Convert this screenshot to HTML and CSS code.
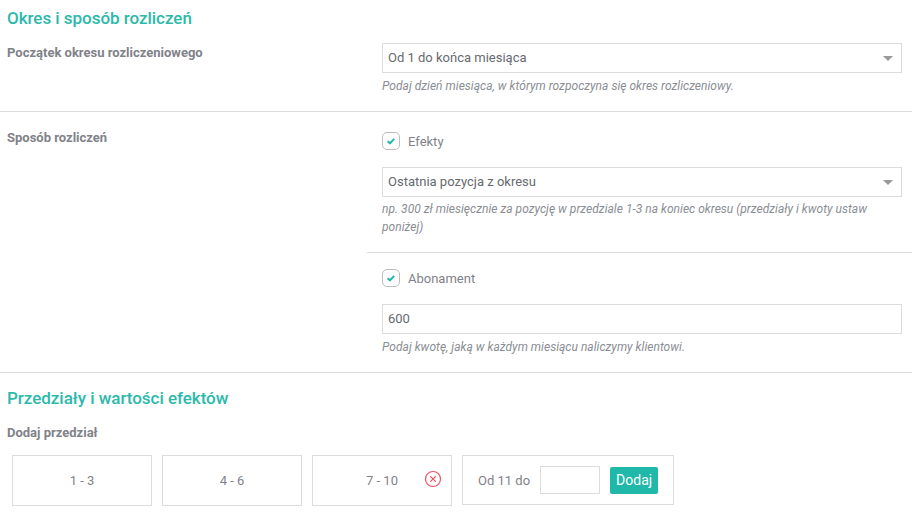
FILE: index.html
```html
<!DOCTYPE html>
<html lang="pl">
<head>
<meta charset="utf-8">
<title>Okres i sposób rozliczeń</title>
<link rel="stylesheet" href="styles.css">
</head>
<body>
<h2 class="heading first">Okres i sposób rozliczeń</h2>
<section class="row row-period">
  <div class="label">Początek okresu rozliczeniowego</div>
  <div class="field">
    <div class="select"><span>Od 1 do końca miesiąca</span><i class="caret"></i></div>
    <p class="hint">Podaj dzień miesiąca, w którym rozpoczyna się okres rozliczeniowy.</p>
  </div>
</section>
<section class="row row-method">
  <div class="label">Sposób rozliczeń</div>
  <div class="field-wide">
    <div class="sub sub-top">
      <label class="check"><span class="box"><svg viewBox="0 0 10 10" width="10" height="10"><path d="M1.6 5.2 4 7.3 8.2 2.9" fill="none" stroke="#20b8a9" stroke-width="2"/></svg></span>Efekty</label>
      <div class="select"><span>Ostatnia pozycja z okresu</span><i class="caret"></i></div>
      <p class="hint hint-tight">np. 300 zł miesięcznie za pozycję w przedziale 1-3 na koniec okresu (przedziały i kwoty ustaw poniżej)</p>
    </div>
    <div class="sub sub-bottom">
      <label class="check"><span class="box"><svg viewBox="0 0 10 10" width="10" height="10"><path d="M1.6 5.2 4 7.3 8.2 2.9" fill="none" stroke="#20b8a9" stroke-width="2"/></svg></span>Abonament</label>
      <div class="select"><span>600</span></div>
      <p class="hint">Podaj kwotę, jaką w każdym miesiącu naliczymy klientowi.</p>
    </div>
  </div>
</section>
<h2 class="heading second">Przedziały i wartości efektów</h2>
<div class="label add-label">Dodaj przedział</div>
<div class="ranges">
  <div class="range">1 - 3</div>
  <div class="range">4 - 6</div>
  <div class="range range-x">7 - 10
    <svg class="remove" viewBox="0 0 18 18" width="18" height="18"><circle cx="9" cy="9" r="7.5" fill="none" stroke="#f0505f" stroke-width="1.2"/><path d="M6.2 6.2 11.8 11.8M11.8 6.2 6.2 11.8" stroke="#f0505f" stroke-width="1.2"/></svg>
  </div>
  <div class="range-add">
    <span>Od 11 do</span>
    <span class="mini-input"></span>
    <button class="add" type="button">Dodaj</button>
  </div>
</div>
</body>
</html>
```
FILE: styles.css
```css
* { box-sizing: border-box; }
html, body { margin: 0; padding: 0; }
body {
  width: 912px;
  height: 519px;
  overflow: hidden;
  background: #fff;
  font-family: Roboto, "Liberation Sans", sans-serif;
  font-size: 13px;
  color: #7f8289;
}
.heading {
  margin: 0;
  font-size: 17px;
  line-height: 20px;
  font-weight: 500;
  letter-spacing: -0.03px;
  color: #2bb9aa;
  padding-left: 7px;
}
.first { padding-top: 8px; height: 43px; }
.second { margin-top: 15px; }
.row { display: flex; border-bottom: 1px solid #dcdcdc; }
.row-period { height: 69px; }
.row-method { height: 261px; }
.label {
  font-weight: 700;
  font-size: 13px;
  line-height: 20px;
  padding-left: 7px;
  color: #7f8289;
}
.row .label { width: 367px; flex: none; }
.row-method .label { padding-top: 16px; }
.field { flex: 1; padding: 0 10px 0 15px; }
.field-wide { flex: 1; display: flex; flex-direction: column; }
.sub { padding: 0 10px 0 15px; }
.sub-top { height: 141px; border-bottom: 1px solid #dcdcdc; padding-top: 19px; }
.sub-bottom { padding-top: 15px; }
.select {
  display: flex;
  align-items: center;
  justify-content: space-between;
  height: 30px;
  border: 1px solid #dcdcdc;
  padding: 0 9px 2px 5px;
  font-size: 13px;
  color: #666a70;
  background: #fff;
}
.caret {
  width: 0;
  height: 0;
  margin-top: 2px;
  margin-right: -1px;
  border-left: 5px solid transparent;
  border-right: 5px solid transparent;
  border-top: 5px solid #999;
}
.hint {
  margin: 4px 0 0;
  font-size: 12px;
  line-height: 18px;
  font-style: italic;
  letter-spacing: 0.025px;
  color: #8a8e94;
}
.hint-tight { margin-top: 3px; }
.check {
  display: flex;
  align-items: center;
  gap: 8px;
  height: 20px;
  margin-bottom: 16px;
  font-size: 13px;
  color: #7f8289;
}
.box {
  display: flex;
  align-items: center;
  justify-content: center;
  width: 18px;
  height: 18px;
  border: 1px solid #bdbdbd;
  border-radius: 5px;
}
.add-label { margin-top: 15px; }
.ranges { display: flex; gap: 10px; padding: 12px 0 0 12px; }
.range {
  position: relative;
  display: flex;
  align-items: center;
  justify-content: center;
  width: 140px;
  height: 51px;
  border: 1px solid #dcdcdc;
  color: #7f8289;
}
.remove { position: absolute; left: 111px; top: 14px; }
.range-add {
  display: flex;
  align-items: center;
  width: 212px;
  height: 50px;
  border: 1px solid #dcdcdc;
  padding-left: 15px;
}
.mini-input {
  width: 60px;
  height: 28px;
  border: 1px solid #dcdcdc;
  margin: 0 10px;
}
.add {
  width: 48px;
  height: 27px;
  border: 0;
  border-radius: 2px;
  background: #20b8a9;
  color: #fff;
  font: 400 14px Roboto, sans-serif;
  padding: 0;
}
```
